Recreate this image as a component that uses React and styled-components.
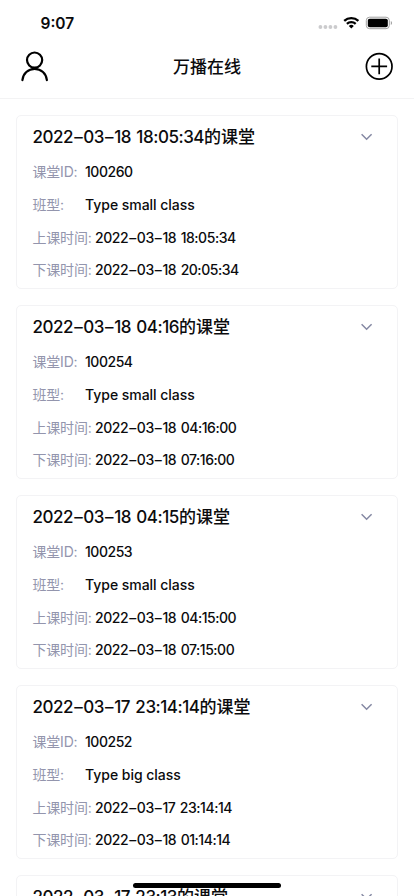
import React from "react";
import styled, { createGlobalStyle } from "styled-components";

const GlobalStyle = createGlobalStyle`
  * { box-sizing: border-box; }
  html, body { margin: 0; padding: 0; background: #fff; }
  body {
    font-family: Inter, "Noto Sans CJK SC", sans-serif;
    color: #0b0b0d;
    overflow: hidden;
  }
`;

const Screen = styled.div`
  position: relative;
  width: 414px;
  height: 896px;
  overflow: hidden;
  background: #fff;
`;

const StatusBar = styled.div`
  display: flex;
  justify-content: space-between;
  align-items: center;
  height: 44px;
  padding: 4px 21px 0 40.5px;
`;

const Clock = styled.span`
  font-size: 15.5px;
  line-height: 20px;
  font-weight: 600;
  letter-spacing: 0;
`;

const NavBar = styled.header`
  display: flex;
  align-items: center;
  justify-content: space-between;
  height: 55px;
  padding: 0 20px 8px;
  border-bottom: 1px solid #f3f3f4;
`;

const NavButton = styled.button`
  display: flex;
  width: 30px;
  height: 32px;
  padding: 0;
  border: 0;
  background: none;
  color: #000;
`;

const NavTitle = styled.h1`
  margin: 0;
  font-size: 17px;
  line-height: 24px;
  font-weight: 500;
`;

const List = styled.main`
  display: flex;
  flex-direction: column;
  gap: 16px;
  padding: 16px 16px 0;
`;

const Card = styled.article`
  flex: none;
  height: 174px;
  padding: 8px 23px 0 15.5px;
  border: 1px solid #f3f3f5;
  border-radius: 5px;
`;

const CardHeader = styled.div`
  display: flex;
  align-items: center;
  justify-content: space-between;
  height: 26px;
  margin-bottom: 5.9px;
`;

const CardTitle = styled.h2`
  margin: 0;
  font-size: 17px;
  line-height: 26px;
  font-weight: 500;
  white-space: nowrap;
`;

const DateText = styled.span`
  letter-spacing: -0.46px;
  word-spacing: 1.2px;
`;

const Dash = styled.span`
  margin: 0 1.1px;
`;

const Row = styled.div`
  display: flex;
  align-items: center;
  height: 32.66px;
  font-size: 14px;
  line-height: 20px;
  white-space: nowrap;
`;

const Label = styled.span`
  width: ${(p) => (p.$wide ? "62.5px" : "52.5px")};
  color: #9395ad;
  font-family: Inter, "Noto Sans CJK SC", sans-serif;
  font-weight: 400;
  letter-spacing: -0.2px;
`;

const Value = styled.span`
  font-weight: 500;
  letter-spacing: ${(p) => (p.$numeric ? "-0.46px" : "-0.03px")};
`;

const HomeIndicator = styled.div`
  position: absolute;
  left: 133px;
  bottom: 8px;
  width: 148px;
  height: 5px;
  border-radius: 3px;
  background: #000;
`;

const StatusIcons = () => (
  <svg width="76" height="16" viewBox="0 0 76 16">
    <g fill="#cbcbcd">
      <circle cx="3.4" cy="11" r="1.9" />
      <circle cx="8.4" cy="11" r="1.9" />
      <circle cx="13.4" cy="11" r="1.9" />
      <circle cx="18.4" cy="11" r="1.9" />
    </g>
    <g fill="none" stroke="#000" strokeWidth="2.3">
      <path d="M27.2 4.9a10.4 10.4 0 0 1 14.2 0" />
      <path d="M29.9 7.8a6.5 6.5 0 0 1 8.8 0" />
    </g>
    <path d="M31.8 10a3.7 3.7 0 0 1 5 0l-2.5 2.6z" fill="#000" />
    <rect x="49.3" y="1.2" width="23" height="11.5" rx="3.3" fill="none" stroke="#a1a1a1" />
    <rect x="50.8" y="2.7" width="20" height="8.5" rx="1.9" fill="#000" />
    <path d="M73.8 5v4a2.2 2.2 0 0 0 0-4z" fill="#a1a1a1" />
  </svg>
);

const PersonIcon = () => (
  <svg width="30" height="32" viewBox="0 0 30 32" fill="none" stroke="currentColor" strokeWidth="2.2">
    <circle cx="14.6" cy="9.1" r="7.6" />
    <path d="M2.4 29.1a12.3 12.4 0 0 1 24.5 0" strokeLinecap="round" />
  </svg>
);

const PlusIcon = () => (
  <svg width="30" height="32" viewBox="0 0 30 32" fill="none" stroke="currentColor" strokeWidth="1.7">
    <circle cx="15.2" cy="15.4" r="12.8" />
    <path d="M15.2 7.5v15.8M7.3 15.4h15.8" />
  </svg>
);

const Chevron = () => (
  <svg width="14" height="10" viewBox="0 0 14 10" fill="none" stroke="#8589a3" strokeWidth="1.5">
    <path d="M1.6 2.2l5 5 5-5" />
  </svg>
);

const classes = [
  { title: "2022–03–18 18:05:34", id: "100260", type: "Type small class", start: "2022–03–18 18:05:34", end: "2022–03–18 20:05:34" },
  { title: "2022–03–18 04:16", id: "100254", type: "Type small class", start: "2022–03–18 04:16:00", end: "2022–03–18 07:16:00" },
  { title: "2022–03–18 04:15", id: "100253", type: "Type small class", start: "2022–03–18 04:15:00", end: "2022–03–18 07:15:00" },
  { title: "2022–03–17 23:14:14", id: "100252", type: "Type big class", start: "2022–03–17 23:14:14", end: "2022–03–18 01:14:14" },
  { title: "2022–03–17 23:13" },
];

const FormattedDate = ({ value }) => {
  const [year, month, rest] = value.split("–");
  return (
    <DateText>{year}<Dash>–</Dash>{month}<Dash>–</Dash>{rest}</DateText>
  );
};

const ClassCard = ({ item }) => (
  <Card>
    <CardHeader>
      <CardTitle><FormattedDate value={item.title} />的课堂</CardTitle>
      <Chevron />
    </CardHeader>
    {item.id && (
      <>
        <Row><Label>课堂ID:</Label><Value $numeric>{item.id}</Value></Row>
        <Row><Label>班型:</Label><Value>{item.type}</Value></Row>
        <Row><Label $wide>上课时间:</Label><Value><FormattedDate value={item.start} /></Value></Row>
        <Row><Label $wide>下课时间:</Label><Value><FormattedDate value={item.end} /></Value></Row>
      </>
    )}
  </Card>
);

export default function App() {
  return (
    <Screen>
      <GlobalStyle />
      <StatusBar><Clock>9:07</Clock><StatusIcons /></StatusBar>
      <NavBar>
        <NavButton aria-label="个人"><PersonIcon /></NavButton>
        <NavTitle>万播在线</NavTitle>
        <NavButton aria-label="添加"><PlusIcon /></NavButton>
      </NavBar>
      <List>
        {classes.map((item) => <ClassCard key={item.title} item={item} />)}
      </List>
      <HomeIndicator />
    </Screen>
  );
}
